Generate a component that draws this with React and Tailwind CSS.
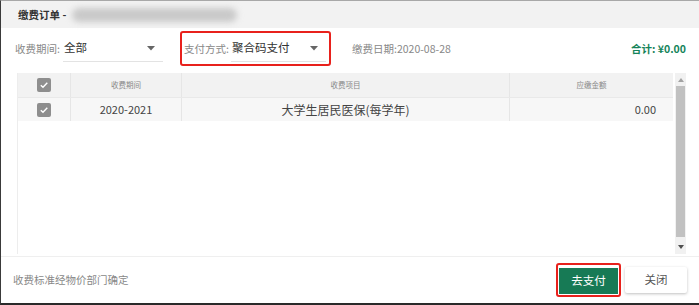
import React from "react";

const font = { fontFamily: '"Noto Sans CJK SC", "Noto Sans", sans-serif' };

// Casilla marcada gris
const Check = () => (
  <span className="inline-flex h-[14px] w-[14px] items-center justify-center rounded-[2px] bg-[#8e8e8e]">
    <svg width="10" height="10" viewBox="0 0 10 10">
      <path d="M1.8 5.2 L4 7.3 L8.3 2.8" fill="none" stroke="#fff" strokeWidth="1.4" />
    </svg>
  </span>
);

const Arrow = () => (
  <svg width="8" height="5" viewBox="0 0 8 5">
    <path d="M0 0 L8 0 L4 4.5 Z" fill="#666" />
  </svg>
);

const Select = ({ value, width }) => (
  <div className={`flex h-[26px] items-center justify-between border-b border-[#e3e3e3] pl-[1px] pr-[8px] ${width}`}>
    <span className="text-[11.5px] text-[#333]">{value}</span>
    <Arrow />
  </div>
);

export default function App() {
  return (
    <div style={font} className="flex h-[305px] w-[699px] flex-col overflow-hidden border-l border-b-2 border-l-[#3a3a3a] border-b-[#2a2a2a] border-t border-t-[#a8a8a8] bg-white">
      {/* cabecera */}
      <div className="flex h-[27px] shrink-0 items-center bg-[#f2f2f2] pl-[17px]">
        <span className="text-[10.5px] font-bold text-[#333]">缴费订单 -</span>
        <div className="ml-[6px] h-[14px] w-[165px] rounded-full bg-[#c9c9c9] blur-[3px]" />
      </div>

      {/* filtros */}
      <div className="flex h-[41px] shrink-0 items-center pl-[14px] pr-[13px]">
        <span className="w-[48px] text-[10.5px] text-[#888]">收费期间:</span>
        <Select value="全部" width="w-[100px]" />
        <div className="ml-[17px] flex h-[35px] items-center rounded-[3px] border-2 border-[#e8211c] pl-[2px] pr-[3px]">
          <span className="w-[47px] text-[10.5px] text-[#888]">支付方式:</span>
          <Select value="聚合码支付" width="w-[95px]" />
        </div>
        <span className="ml-[21px] text-[10.5px] text-[#888]">缴费日期:2020-08-28</span>
        <span className="ml-auto text-[10.5px] font-bold text-[#15845a]">合计: ¥0.00</span>
      </div>

      {/* tabla */}
      <div className="flex min-h-0 flex-1 pl-[16px] pr-[13px] pt-[4px]">
        <div className="flex flex-1 flex-col border-l border-[#ededed]">
          <div className="flex h-[24px] bg-[#f2f2f2] text-[7.5px] text-[#888]">
            <div className="flex w-[53px] items-center justify-center border-r border-[#e6e6e6]"><Check /></div>
            <div className="flex w-[111px] items-center justify-center border-r border-[#e6e6e6]">收费期间</div>
            <div className="flex w-[328px] items-center justify-center border-r border-[#e6e6e6]">收费项目</div>
            <div className="flex flex-1 items-center justify-center">应缴金额</div>
          </div>
          <div className="flex h-[24px] border-t border-[#e9e9e9] bg-[#f7f7f7] text-[12px] text-[#444]">
            <div className="flex w-[53px] items-center justify-center border-r border-[#e6e6e6]"><Check /></div>
            <div className="flex w-[111px] items-center justify-center border-r border-[#e6e6e6] text-[11px]">2020-2021</div>
            <div className="flex w-[328px] items-center justify-center border-r border-[#e6e6e6]">大学生居民医保(每学年)</div>
            <div className="flex flex-1 items-center justify-end pr-[17px] text-[11px]">0.00</div>
          </div>
          <div className="flex-1" />
        </div>
        {/* barra de desplazamiento */}
        <div className="ml-[2px] flex w-[11px] flex-col items-center bg-[#f1f1f1]">
          <svg className="mt-[5px]" width="6" height="4" viewBox="0 0 6 4"><path d="M0 4 L6 4 L3 0 Z" fill="#a3a3a3" /></svg>
          <div className="mt-[4px] w-[9px] flex-1 bg-[#c1c1c1]" />
          <svg className="mb-[5px] mt-[8px]" width="6" height="4" viewBox="0 0 6 4"><path d="M0 0 L6 0 L3 4 Z" fill="#505050" /></svg>
        </div>
      </div>

      {/* pie */}
      <div className="mt-[2px] flex h-[47px] shrink-0 items-center border-t border-[#efefef] pl-[12px] pr-[12px]">
        <span className="text-[10.5px] text-[#888]">收费标准经物价部门确定</span>
        <div className="ml-auto flex items-center">
          <div className="rounded-[3px] border-2 border-[#e8211c] p-[1px]">
            <button className="h-[26px] w-[59px] bg-[#177a55] text-[11.5px] text-white">去支付</button>
          </div>
          <button className="ml-[4px] h-[26px] w-[62px] rounded-[2px] bg-white text-[11.5px] text-[#555] shadow-[0_1px_3px_rgba(0,0,0,0.25)]">关闭</button>
        </div>
      </div>
    </div>
  );
}
